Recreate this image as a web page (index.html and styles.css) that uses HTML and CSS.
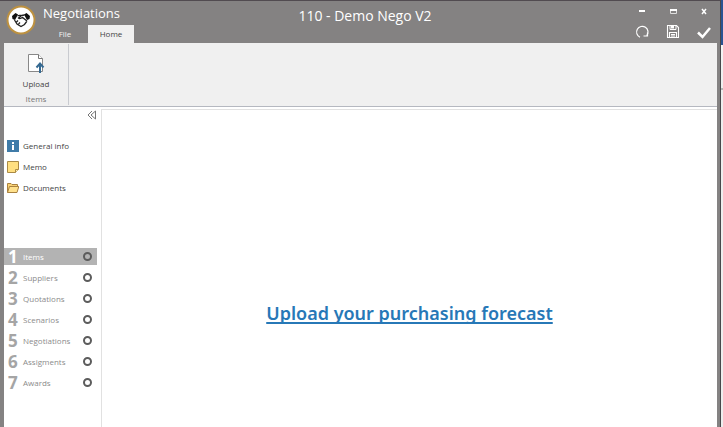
FILE: index.html
```html
<!DOCTYPE html>
<html lang="en">
<head>
<meta charset="utf-8">
<title>Negotiations</title>
<link rel="stylesheet" href="styles.css">
</head>
<body>
<div class="window">
  <header class="titlebar">
    <svg class="logo" viewBox="0 0 30 30" aria-hidden="true">
      <circle cx="15" cy="15" r="13.500" fill="#fff" stroke="#bd9140" stroke-width="2"/>
      <path d="M6 11l3.500-3 2.500 1.500-3 5.500-2.500-1zM24 11l-3.500-3-2.500 1.500 3 5.500 2.500-1z" fill="#111"/>
      <path d="M11.500 10.500c2 .5 2.500-.5 4 0l3-.5M15.500 10.500l-3 2.500c1.500 1.500 3-.5 4-.5l4.500 3.500M8.500 15l2.500 4 4 2.500 3.500-2 2.500-3.500M10.500 17l1.500-1.500M12.500 19l1.500-1.500" fill="none" stroke="#222" stroke-width="1.300"/>
    </svg>
    <div class="brand">
      <h1 class="app-name">Negotiations</h1>
      <nav class="tabs">
        <button class="tab">File</button>
        <button class="tab tab-active">Home</button>
      </nav>
    </div>
    <div class="document-title">110 - Demo Nego V2</div>
    <div class="controls">
      <button class="control" aria-label="Minimize"><svg viewBox="0 0 16 16"><path d="M5 7h6" stroke="#fff" stroke-width="2"/></svg></button>
      <button class="control" aria-label="Maximize"><svg viewBox="0 0 16 16"><path d="M5.500 5.500h6v4h-6z" fill="none" stroke="#dedede"/><path d="M5 6h7" stroke="#fff" stroke-width="2"/></svg></button>
      <button class="control" aria-label="Close"><svg viewBox="0 0 16 16"><path d="M6 5l4 5M10 5l-4 5" stroke="#fff" stroke-width="1.500"/></svg></button>
      <button class="control" aria-label="Refresh"><svg viewBox="0 0 16 16"><path d="M6 13.200A5.700 5.700 0 1 1 12.800 11.500M9.500 12h4V8.500" fill="none" stroke="#fff" stroke-width="1.200"/></svg></button>
      <button class="control" aria-label="Save"><svg viewBox="0 0 16 16"><path d="M2.500 1.500h9l2 2v10h-11zM4.500 13V8.500h7V13M6 10.500h4M6 12h4" fill="none" stroke="#fff" stroke-width="1.100"/><path d="M5 1.500v4h6v-4" fill="none" stroke="#fff"/><path d="M6 1.500h3v3H6z" fill="#fff"/></svg></button>
      <button class="control" aria-label="Confirm"><svg viewBox="0 0 16 16"><path d="M2 8.500l4.500 4.500L14 4" fill="none" stroke="#fff" stroke-width="2.500"/></svg></button>
    </div>
  </header>
  <div class="ribbon">
    <section class="ribbon-group" aria-labelledby="group-items">
      <button class="ribbon-button">
        <svg class="upload-icon" viewBox="0 0 20 20" aria-hidden="true">
          <path d="M2.500 1.500h10l4 4v13h-14z" fill="#fff" stroke="#888"/>
          <path d="M12.500 1.500v4h4" fill="#fff" stroke="#777"/>
          <path d="M14 20v-8M10.500 14.500l3.500-4 3.500 4" fill="none" stroke="#356a92" stroke-width="2"/>
        </svg>
        <span>Upload</span>
      </button>
      <span class="group-label" id="group-items">Items</span>
    </section>
  </div>
  <div class="workspace">
    <aside class="sidebar">
      <button class="collapse" aria-label="Collapse panel"><svg viewBox="0 0 10 10"><path d="M5 1L1 5l4 4M8.500 1L4 5l4.500 4zM8.500 1v8" fill="none" stroke="#777"/></svg></button>
      <nav class="links">
        <a class="link" href="#"><svg viewBox="0 0 12 12"><path d="M0 0h12v12H0z" fill="#3f7ba8"/><path d="M5 2h2v2H5zM5 5h2v5H5z" fill="#fff"/></svg><span>General info</span></a>
        <a class="link" href="#"><svg viewBox="0 0 12 12"><path d="M.5.500h11v8l-3 3h-8z" fill="#ffdf80" stroke="#aa8a45"/><path d="M8.500 11.500v-3h3" fill="#fff0b5" stroke="#aa8a45"/></svg><span>Memo</span></a>
        <a class="link" href="#"><svg viewBox="0 0 12 12"><path d="M.5 10.500v-9H4l1 1h5.500v2" fill="#f8d174" stroke="#aa8240"/><path d="M.5 10.500l2-6h9.300l-1.800 6z" fill="#ffe18c" stroke="#aa8240"/></svg><span>Documents</span></a>
      </nav>
      <nav class="steps">
        <a class="step step-active" href="#"><b class="number">1</b><span>Items</span><i class="status"></i></a>
        <a class="step" href="#"><b class="number">2</b><span>Suppliers</span><i class="status"></i></a>
        <a class="step" href="#"><b class="number">3</b><span>Quotations</span><i class="status"></i></a>
        <a class="step" href="#"><b class="number">4</b><span>Scenarios</span><i class="status"></i></a>
        <a class="step" href="#"><b class="number">5</b><span>Negotiations</span><i class="status"></i></a>
        <a class="step" href="#"><b class="number">6</b><span>Assigments</span><i class="status"></i></a>
        <a class="step" href="#"><b class="number">7</b><span>Awards</span><i class="status"></i></a>
      </nav>
    </aside>
    <main class="content"><a class="upload-link" href="#">Upload your purchasing forecast</a></main>
  </div>
</div>
<div class="desktop"></div>
</body>
</html>
```
FILE: styles.css
```css
* { box-sizing: border-box; }
body {
  margin: 0;
  min-height: 100vh;
  display: flex;
  background: #fff;
  color: #444;
  font: 8px/12px "Trebuchet MS", "Open Sans", sans-serif;
}
button { padding: 0; border: 0; background: none; color: inherit; font: inherit; }
a { color: inherit; text-decoration: none; }
svg { display: block; flex: none; }
.window {
  flex: 1;
  min-width: 0;
  display: flex;
  flex-direction: column;
  background: #848282;
  border-top: 1px solid #514b50;
  border-right: 1px solid #47494c;
}
.titlebar {
  height: 42px;
  display: grid;
  grid-template-columns: 36px 1fr auto 1fr 24px;
  padding: 0 8px 0 6px;
  color: #fff;
}
.logo { width: 30px; height: 30px; margin-top: 4px; }
.brand { display: flex; flex-direction: column; justify-content: space-between; }
.app-name { margin: 3px 0 0; padding-left: 1px; font-size: 13px; line-height: 18px; font-weight: 400; }
.tabs { display: flex; }
.tab { width: 46px; height: 18px; color: #f2f2f2; }
.tab-active { background: #f0f0f0; color: #444; }
.document-title { padding-top: 5px; font-size: 14px; line-height: 20px; }
.controls {
  grid-column: 4 / 6;
  justify-self: end;
  display: grid;
  grid-template-columns: repeat(3, 16px);
  grid-template-rows: 16px 16px;
  column-gap: 15px;
  row-gap: 4px;
  padding-top: 3px;
}
.control svg { width: 16px; height: 16px; }
.ribbon {
  height: 64px;
  display: flex;
  margin: 0 3px 0 4px;
  background: #f0f0f0;
  border-bottom: 1px solid #b5b8c0;
}
.ribbon-group {
  width: 65px;
  margin: 1px 0;
  padding: 9px 0 0;
  display: flex;
  flex-direction: column;
  align-items: center;
  border-right: 1px solid #c9cbd0;
}
.ribbon-button { display: flex; flex-direction: column; align-items: center; gap: 5px; }
.upload-icon { width: 20px; height: 20px; }
.group-label { margin-top: 3px; color: #777; }
.workspace { flex: 1; display: flex; margin: 0 3px 0 4px; background: #fff; }
.sidebar { width: 97px; flex: none; padding-top: 3px; }
.collapse { display: block; margin-left: 83px; }
.collapse svg { width: 10px; height: 10px; }
.links { padding: 15px 0 0 3px; }
.link { height: 21px; display: flex; align-items: center; gap: 4px; }
.link svg { width: 12px; height: 12px; }
.steps { margin-top: 50px; }
.step {
  height: 17px;
  margin: 0 4px 4px 0;
  display: flex;
  align-items: center;
  padding: 0 5px 0 4px;
  color: #8b8b8b;
}
.number { width: 15px; color: #a5a5a5; font: 700 17px/17px "Open Sans", sans-serif; }
.status { width: 9px; height: 9px; margin-left: auto; border: 2px solid #5c5c5c; border-radius: 50%; }
.step-active { background: #b3b3b3; color: #fff; }
.step-active .number { color: #fff; }
.content {
  flex: 1;
  margin-top: 2px;
  padding: 193px 0 0;
  border: 1px solid #e1e1e1;
  border-width: 1px 0 0 1px;
  text-align: center;
}
.upload-link {
  color: #2778b7;
  font: 600 18px/21px "Noto Sans", "Open Sans", sans-serif;
  text-decoration: underline 2px;
  text-decoration-skip-ink: none;
  text-underline-offset: 2px;
}
.desktop { width: 2px; background: linear-gradient(#285493 45px, #f4f4f4 45px, #eee 88px, #b8b8b8 88px, #b8b8b8 90px, #eee 90px); }
```
